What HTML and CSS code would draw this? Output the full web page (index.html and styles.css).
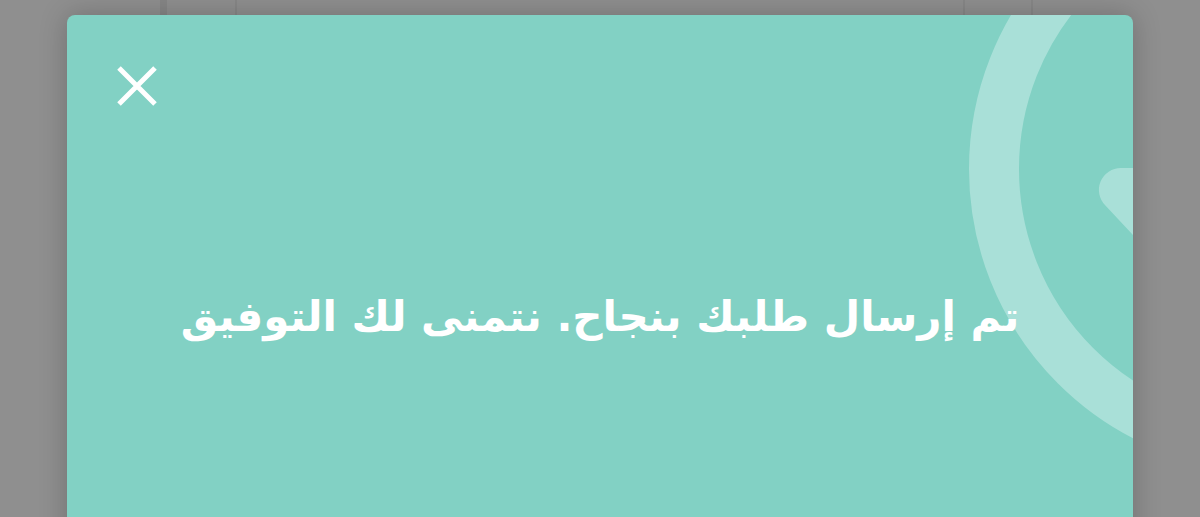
FILE: index.html
```html
<!DOCTYPE html>
<html lang="ar">
<head>
<meta charset="utf-8">
<link rel="stylesheet" href="styles.css">
</head>
<body>
<div class="card">
  <svg class="deco" width="1066" height="520" viewBox="0 0 1066 520">
    <circle cx="1205" cy="154" r="278" fill="none" stroke="#a9e0d8" stroke-width="50"/>
    <path d="M1066,153 L1054,153 A22,22 0 0 0 1038.4,190.6 L1066,220 Z" fill="#a9e0d8"/>
  </svg>
  <button class="close" aria-label="close">
    <svg width="42" height="42" viewBox="0 0 42 42">
      <path d="M3,3 L39,39 M39,3 L3,39" stroke="#fff" stroke-width="5" fill="none"/>
    </svg>
  </button>
  <p class="msg" dir="rtl">تم إرسال طلبك بنجاح. نتمنى لك التوفيق</p>
</div>
</body>
</html>
```
FILE: styles.css
```css
html, body {
  margin: 0;
  padding: 0;
  height: 100%;
  overflow: hidden;
}
body {
  background-color: #8f8f8f;
  background-image:
    linear-gradient(to right,
      transparent 160px, #868686 160px, #868686 167px, transparent 167px,
      transparent 235px, #878787 235px, #878787 237px, transparent 237px,
      transparent 963px, #878787 963px, #878787 965px, transparent 965px,
      transparent 1031px, #878787 1031px, #878787 1033px, transparent 1033px);
  background-repeat: no-repeat;
  background-size: 100% 15px;
  padding: 15px 67px 0;
  font-family: "DejaVu Sans", "Noto Sans", sans-serif;
}
.card {
  position: relative;
  height: 560px;
  background: #82d1c4;
  border-radius: 8px;
  overflow: hidden;
  box-shadow: 0 0 28px rgba(0, 0, 0, 0.22);
  display: flex;
  flex-direction: column;
}
.deco {
  position: absolute;
  left: 0;
  top: 0;
}
.close {
  position: relative;
  align-self: flex-start;
  margin: 50px 0 0 49px;
  width: 42px;
  height: 42px;
  padding: 0;
  border: 0;
  background: none;
  display: flex;
}
.msg {
  position: relative;
  margin: 184px 0 0;
  text-align: center;
  color: #fff;
  font-weight: bold;
  font-size: 42px;
  line-height: 52px;
}
```
